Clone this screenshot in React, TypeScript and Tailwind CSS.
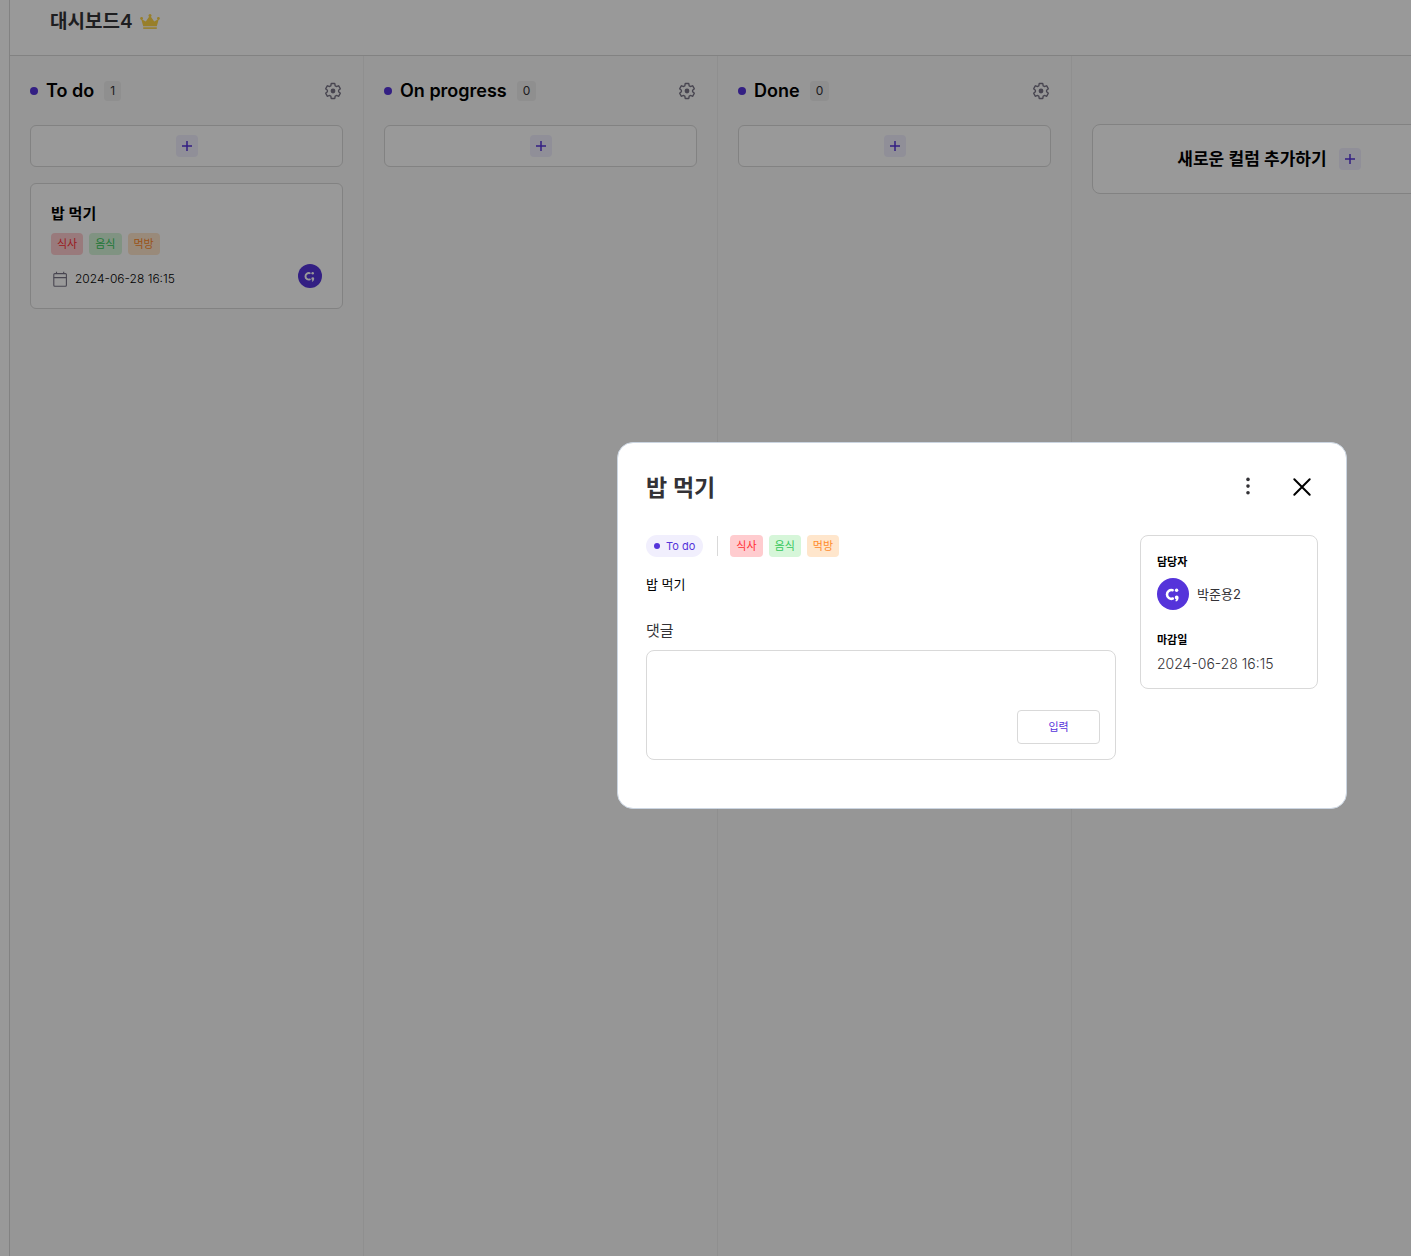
import React from "react";

function Plus() {
  return (
    <span className="flex size-[22px] shrink-0 items-center justify-center rounded bg-[#f1effd]">
      <svg viewBox="0 0 22 22" className="size-[22px]" aria-hidden="true">
        <path d="M11 6v10M6 11h10" stroke="#5534da" strokeWidth="1.5" fill="none" />
      </svg>
    </span>
  );
}

function Gear() {
  return (
    <svg viewBox="0 0 24 24" className="size-[18px]" fill="none" stroke="#787486" strokeWidth="1.8" strokeLinejoin="round" aria-hidden="true">
      <path d="M19.43 12.98c.04-.32.07-.64.07-.98 0-.34-.03-.66-.07-.98l2.11-1.65c.19-.15.24-.42.12-.64l-2-3.46a.5.5 0 0 0-.61-.22l-2.49 1c-.52-.4-1.08-.73-1.69-.98l-.38-2.65A.488.488 0 0 0 14 2h-4c-.25 0-.46.18-.49.42l-.38 2.65c-.61.25-1.17.59-1.69.98l-2.49-1a.5.5 0 0 0-.61.22l-2 3.46c-.13.22-.07.49.12.64l2.11 1.65c-.04.32-.07.65-.07.98 0 .33.03.66.07.98l-2.11 1.65c-.19.15-.24.42-.12.64l2 3.46a.5.5 0 0 0 .61.22l2.49-1c.52.4 1.08.73 1.69.98l.38 2.65c.03.24.24.42.49.42h4c.25 0 .46-.18.49-.42l.38-2.65c.61-.25 1.17-.59 1.69-.98l2.49 1a.5.5 0 0 0 .61-.22l2-3.46c.12-.22.07-.49-.12-.64z" />
      <circle cx="12" cy="12" r="3.2" fill="#787486" stroke="none" />
    </svg>
  );
}

function Crown() {
  return (
    <svg viewBox="0 0 20 16" className="h-4 w-5" fill="#fdd446" aria-hidden="true">
      <path d="M3.2 12.2 1.2 5 5.8 7.4 10 1.4l4.2 6L18.8 5l-2 7.2z" />
      <circle cx="1.6" cy="4.5" r="1.4" />
      <circle cx="10" cy="1.5" r="1.5" />
      <circle cx="18.4" cy="4.5" r="1.4" />
      <path d="M3.2 13.3h13.6v1.6H3.2z" />
    </svg>
  );
}

function Avatar({ className }: { className: string }) {
  return (
    <svg viewBox="0 0 32 32" className={className} role="img" aria-label="프로필">
      <circle cx="16" cy="16" r="16" fill="#5534da" />
      <path d="M15.6 12.2A4.4 4.4 0 1 0 15.8 20.6" stroke="#fff" strokeWidth="2.6" fill="none" strokeLinecap="round" />
      <circle cx="19.6" cy="12.2" r="1.7" fill="#fff" />
      <path d="M17.8 19.4a1.9 1.9 0 0 1 3.8 0c0 2-1 3.6-2.6 4.2l-.7-.9c.6-.4.9-.9 1-1.5-.9 0-1.5-.8-1.5-1.8z" fill="#fff" />
    </svg>
  );
}

function Calendar() {
  return (
    <svg viewBox="0 0 18 18" className="size-[18px]" fill="none" stroke="#787486" strokeWidth="1.1" aria-hidden="true">
      <rect x="2.8" y="3.6" width="12.6" height="12.6" rx="1" />
      <path d="M2.8 7.6h12.6M5.5 1.8v1.8M12.7 1.8v1.8" />
    </svg>
  );
}

function Tags() {
  return (
    <ul className="flex gap-1.5 text-[11px] leading-[22px]">
      <li className="rounded bg-[#ffcccf] px-1.5 text-[#ff2f35]">식사</li>
      <li className="rounded bg-[#d6f6d9] px-1.5 text-[#34c759]">음식</li>
      <li className="rounded bg-[#ffe6cc] px-1.5 text-[#ff8a2b]">먹방</li>
    </ul>
  );
}

function Column({ title, count, children }: { title: string; count: number; children?: React.ReactNode }) {
  return (
    <section className="w-[354px] shrink-0 border-r border-[#eeeeee] px-5 pt-6">
      <div className="flex h-[22px] items-center">
        <span className="size-2 rounded-full bg-[#5534da]" />
        <h2 className="ml-2 text-lg leading-[22px] font-semibold text-black">{title}</h2>
        <span className="ml-2.5 rounded bg-[#eeeeee] px-1.5 text-xs leading-5 text-[#333236]">{count}</span>
        <button type="button" aria-label="컬럼 설정" className="mr-px ml-auto">
          <Gear />
        </button>
      </div>
      <button
        type="button"
        aria-label="카드 추가"
        className="mt-[23px] flex h-[42px] w-full items-center justify-center rounded-md border border-[#d9d9d9] bg-white"
      >
        <Plus />
      </button>
      {children}
    </section>
  );
}

function Card() {
  return (
    <article className="mt-4 rounded-md border border-[#d9d9d9] bg-white px-5 pt-[19px] pb-5">
      <h3 className="text-[15px] leading-[22px] font-semibold text-black">밥 먹기</h3>
      <div className="mt-2">
        <Tags />
      </div>
      <div className="mt-[9px] flex items-start justify-between">
        <p className="mt-1.5 flex items-center gap-1.5 text-xs leading-[18px] font-light text-black">
          <Calendar />
          2024-06-28 16:15
        </p>
        <Avatar className="size-6" />
      </div>
    </article>
  );
}

function CardDialog() {
  return (
    <div role="dialog" aria-label="밥 먹기" className="w-[730px] rounded-2xl border border-[#cbd5e1] bg-white px-7 pt-7 pb-12">
      <div className="flex h-8 items-center">
        <h2 className="pt-0.5 text-[23px] leading-8 font-semibold text-[#333236]">밥 먹기</h2>
        <button type="button" aria-label="메뉴" className="ml-auto">
          <svg viewBox="0 0 28 28" className="size-7" fill="#333236" aria-hidden="true">
            <circle cx="14" cy="6.4" r="1.8" />
            <circle cx="14" cy="13.1" r="1.8" />
            <circle cx="14" cy="19.8" r="1.8" />
          </svg>
        </button>
        <button type="button" aria-label="닫기" className="ml-6">
          <svg viewBox="0 0 32 32" className="size-8" fill="none" stroke="#000" strokeWidth="2" strokeLinecap="round" aria-hidden="true">
            <path d="M8.3 8.3l15.4 15.4M23.7 8.3L8.3 23.7" />
          </svg>
        </button>
      </div>
      <div className="mt-8 flex items-start gap-6">
        <div className="min-w-0 grow">
          <div className="flex items-center">
            <span className="flex items-center gap-1.5 rounded-full bg-[#f1effd] px-2 text-[11px] leading-[22px] text-[#5534da]">
              <span className="size-1.5 rounded-full bg-[#5534da]" />
              To do
            </span>
            <span className="mr-3 ml-3.5 h-5 w-px bg-[#d9d9d9]" />
            <Tags />
          </div>
          <p className="mt-[15px] text-[13px] leading-6 text-black">밥 먹기</p>
          <label htmlFor="comment" className="mt-[23px] block text-[15px] leading-6 text-[#333236]">
            댓글
          </label>
          <div className="mt-[7px] flex h-[110px] items-end rounded-lg border border-[#d9d9d9] p-[15px]">
            <textarea id="comment" className="h-full min-w-0 grow resize-none text-sm outline-none" />
            <button type="button" className="h-[34px] w-[83px] rounded border border-[#d9d9d9] bg-white text-[11px] text-[#5534da]">
              입력
            </button>
          </div>
        </div>
        <dl className="w-[178px] shrink-0 rounded-lg border border-[#d9d9d9] px-4 pt-4 pb-3.5">
          <dt className="text-[11px] leading-5 font-semibold text-black">담당자</dt>
          <dd className="mt-1.5 flex items-center gap-2 text-[13px] leading-8 text-[#333236]">
            <Avatar className="size-8" />
            박준용2
          </dd>
          <dt className="mt-5 text-[11px] leading-5 font-semibold text-black">마감일</dt>
          <dd className="mt-1 text-sm leading-5 font-light text-[#333236]">2024-06-28 16:15</dd>
        </dl>
      </div>
    </div>
  );
}

export default function App() {
  return (
    <div className="relative flex min-h-screen overflow-hidden bg-[#fafafa] font-['Inter','Noto_Sans_CJK_KR',sans-serif]">
      <aside className="w-2.5 shrink-0 border-r border-[#d9d9d9] bg-white" />
      <div className="flex min-w-0 grow flex-col">
        <header className="flex items-center gap-[7px] border-b border-[#d9d9d9] bg-white px-10 pt-[7px] pb-[18px]">
          <h1 className="text-[19px] leading-[30px] font-semibold text-[#333236]">대시보드4</h1>
          <Crown />
        </header>
        <main className="flex grow">
          <Column title="To do" count={1}>
            <Card />
          </Column>
          <Column title="On progress" count={0} />
          <Column title="Done" count={0} />
          <section className="shrink-0 px-5 pt-[68px]">
            <button
              type="button"
              className="flex h-[70px] w-[354px] items-center justify-center gap-3 rounded-lg border border-[#d9d9d9] bg-white text-[17px] font-semibold text-black"
            >
              <span className="pt-0.5">새로운 컬럼 추가하기</span>
              <Plus />
            </button>
          </section>
        </main>
      </div>
      <div className="absolute inset-0 flex items-center justify-end bg-black/40 pr-16 pb-[5px]">
        <CardDialog />
      </div>
    </div>
  );
}
